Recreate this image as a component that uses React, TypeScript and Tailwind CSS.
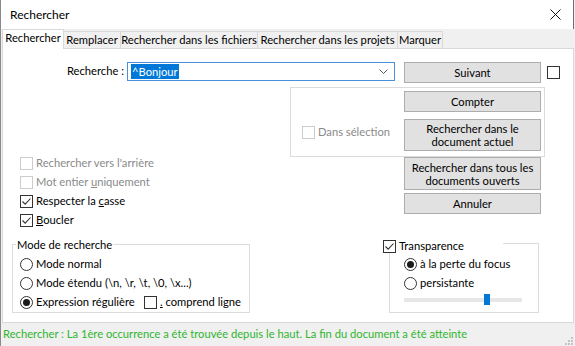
import React from "react";

function Check({ checked, disabled }: { checked?: boolean; disabled?: boolean }) {
  return (
    <span
      className={`w-[13px] h-[13px] border bg-white flex items-center justify-center shrink-0 ${
        disabled ? "border-[#cccccc]" : "border-[#333333]"
      }`}
    >
      {checked && (
        <svg width="11" height="11" viewBox="0 0 11 11">
          <path d="M1.5 5.5 L4.2 8.2 L9.5 2.5" stroke="#333" strokeWidth="1.1" fill="none" />
        </svg>
      )}
    </span>
  );
}

function Radio({ checked }: { checked?: boolean }) {
  return (
    <span className="w-[13px] h-[13px] rounded-full border border-[#333333] bg-white flex items-center justify-center shrink-0">
      {checked && <span className="w-[7px] h-[7px] rounded-full bg-[#1a1a1a]" />}
    </span>
  );
}

function Button({ children, className = "" }: { children: React.ReactNode; className?: string }) {
  return (
    <div
      className={`w-[137px] bg-[#e1e1e1] border border-[#adadad] flex items-center justify-center text-center leading-[13px] ${className}`}
    >
      {children}
    </div>
  );
}

// one line of the options list (checkbox + label)
function Option({
  checked,
  disabled,
  children,
}: {
  checked?: boolean;
  disabled?: boolean;
  children: React.ReactNode;
}) {
  return (
    <div className="h-[19px] flex items-center gap-[3px]">
      <Check checked={checked} disabled={disabled} />
      <span className={disabled ? "text-[#8a8a8a]" : ""}>{children}</span>
    </div>
  );
}

export default function App() {
  return (
    <div className="w-[575px] h-[346px] bg-[#f0f0f0] flex flex-col text-[11.2px] text-black font-['Lato',sans-serif] overflow-hidden border-l border-[#8a8a8a]">
      {/* Title bar */}
      <div className="w-[573px] h-[29px] shrink-0 bg-white flex items-center pl-[9px] border-r border-[#6f6f6f]">
        <span className="text-[12px]">Rechercher</span>
        <svg className="ml-auto mr-[12px]" width="11" height="11" viewBox="0 0 11 11">
          <path d="M0.5 0.5 L10.5 10.5 M10.5 0.5 L0.5 10.5" stroke="#111" strokeWidth="1" />
        </svg>
      </div>

      {/* Tabs */}
      <div className="h-[19px] shrink-0 flex items-end pl-[1px] whitespace-nowrap">
        <div className="relative z-10 w-[62px] h-[20px] -mb-px bg-white border border-b-0 border-[#d9d9d9] flex items-center justify-center pb-[2px]">
          Rechercher
        </div>
        <div className="-ml-px w-[58px] h-[17px] border border-b-0 border-[#d9d9d9] flex items-center justify-center">
          Remplacer
        </div>
        <div className="-ml-px w-[138px] h-[17px] border border-b-0 border-[#d9d9d9] flex items-center justify-center">
          Rechercher dans les fichiers
        </div>
        <div className="-ml-px w-[141px] h-[17px] border border-b-0 border-[#d9d9d9] flex items-center justify-center">
          Rechercher dans les projets
        </div>
        <div className="-ml-px w-[46px] h-[17px] border border-b-0 border-[#d9d9d9] flex items-center justify-center">
          Marquer
        </div>
      </div>

      {/* Tab panel */}
      <div className="ml-px w-[572px] h-[275px] shrink-0 bg-white border border-[#d9d9d9] flex flex-col">
        {/* Search row */}
        <div className="mt-[13px] h-[21px] flex items-start">
          <div className="w-[121px] h-[19px] flex items-center justify-end">Recherche :</div>
          <div className="ml-[3px] w-[268px] h-[19px] border border-[#4a90d9] flex items-center pl-[3px]">
            <span className="bg-[#0078d7] text-white h-[15px] leading-[15px] px-[1px]">^Bonjour</span>
            <svg className="ml-auto mr-[6px]" width="9" height="5" viewBox="0 0 9 5">
              <path d="M0.5 0.5 L4.5 4.5 L8.5 0.5" stroke="#555" strokeWidth="1" fill="none" />
            </svg>
          </div>
          <Button className="ml-[9px] h-[21px] border-[#0078d7]">Suivant</Button>
          <div className="ml-[6px] mt-[4px]">
            <Check />
          </div>
        </div>

        {/* Selection group */}
        <div className="mt-[4px] ml-[287px] w-[255px] h-[70px] border border-[#dcdcdc] flex">
          <div className="w-[113px] h-full flex items-center gap-[3px] pl-[11px] pt-[20px]">
            <Check disabled />
            <span className="text-[#8a8a8a]">Dans sélection</span>
          </div>
          <div className="flex flex-col pt-[3px] gap-[7px]">
            <Button className="h-[21px]">Compter</Button>
            <Button className="h-[32px]">
              Rechercher dans le
              <br />
              document actuel
            </Button>
          </div>
        </div>

        {/* Options + buttons */}
        <div className="flex">
          <div className="w-[401px] -mt-[3px] pl-[17px] flex flex-col">
            <Option disabled>Rechercher vers l'arrière</Option>
            <Option disabled>
              Mot entier <span className="underline">u</span>niquement
            </Option>
            <Option checked>
              Respecter la <span className="underline">c</span>asse
            </Option>
            <Option checked>
              <span className="underline">B</span>oucler
            </Option>
          </div>
          <div className="flex flex-col gap-[3px]">
            <Button className="h-[33px]">
              Rechercher dans tous les
              <br />
              documents ouverts
            </Button>
            <Button className="h-[21px]">Annuler</Button>
          </div>
        </div>

        {/* Mode + transparency */}
        <div className="flex items-start">
          <div className="relative mt-[14px] ml-[9px] w-[238px] h-[69px] border border-[#dcdcdc] pl-[7px] pt-[10px]">
            <div className="absolute left-[3px] -top-[7px] h-[13px] leading-[13px] bg-white px-[1px]">
              Mode de recherche
            </div>
            <div className="h-[19px] flex items-center gap-[3px]">
              <Radio />
              <span>Mode normal</span>
            </div>
            <div className="h-[19px] flex items-center gap-[3px]">
              <Radio />
              <span>Mode étendu (\n, \r, \t, \0, \x...)</span>
            </div>
            <div className="h-[19px] w-[223px] flex items-center gap-[3px] overflow-hidden whitespace-nowrap">
              <Radio checked />
              <span className="w-[105px] shrink-0">Expression régulière</span>
              <Check />
              <span>
                <span className="underline">.</span> comprend ligne nouvelle
              </span>
            </div>
          </div>

          <div className="relative mt-[13px] ml-[139px] w-[150px] h-[70px] border border-[#dcdcdc] pl-[14px] pt-[11px]">
            <div className="absolute -left-[7px] -top-[4px] w-[120px] h-[13px] bg-white flex items-center gap-[3px]">
              <Check checked />
              <span>Transparence</span>
            </div>
            <div className="h-[19px] flex items-center gap-[3px]">
              <Radio checked />
              <span>à la perte du focus</span>
            </div>
            <div className="h-[19px] flex items-center gap-[3px]">
              <Radio />
              <span>persistante</span>
            </div>
            <div className="mt-[1px] h-[12px] flex items-center">
              <div className="relative w-[118px] h-[4px] bg-[#e7e7e7]">
                <div className="absolute left-[80px] -top-[4px] w-[6px] h-[11px] bg-[#0078d7]" />
              </div>
            </div>
          </div>
        </div>
      </div>

      {/* Status bar */}
      <div className="flex-1 flex items-center pl-[2px] text-[#2fb52f] relative">
        <span>Rechercher : La 1ère occurrence a été trouvée depuis le haut. La fin du document a été atteinte</span>
        <svg className="absolute right-[2px] bottom-[1px]" width="9" height="9" viewBox="0 0 9 9">
          <rect x="7" y="1" width="2" height="2" fill="#c3c3c3" />
          <rect x="4" y="4" width="2" height="2" fill="#c3c3c3" />
          <rect x="7" y="4" width="2" height="2" fill="#c3c3c3" />
          <rect x="1" y="7" width="2" height="2" fill="#c3c3c3" />
          <rect x="4" y="7" width="2" height="2" fill="#c3c3c3" />
          <rect x="7" y="7" width="2" height="2" fill="#c3c3c3" />
        </svg>
      </div>
    </div>
  );
}
